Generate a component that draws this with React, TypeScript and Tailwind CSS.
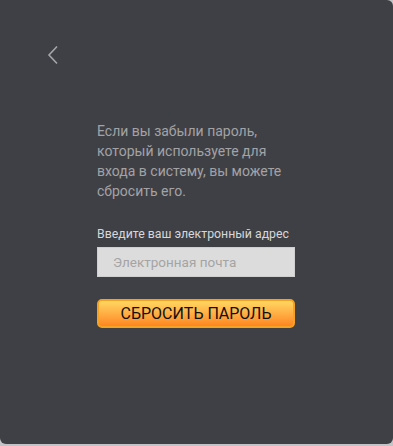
import React from 'react';

export default function App() {
  return (
    <div className="w-[393px] h-[446px] bg-[#c4c4c6]" style={{ fontFamily: 'Roboto, "Liberation Sans", sans-serif' }}>
      <div className="w-[393px] h-[444px] bg-[#3f4045] rounded-tr-[6px] rounded-b-[6px] relative">
        {/* back */}
        <button className="absolute left-[46px] top-[44px] w-[14px] h-[22px] flex items-center justify-center">
          <svg width="12" height="20" viewBox="0 0 12 20" fill="none">
            <path d="M10 1.5 L2 10 L10 18.5" stroke="#a6a6a8" strokeWidth="1.6" />
          </svg>
        </button>

        <div className="pt-[121px] pl-[97px] w-[296px]">
          <p className="text-[14px] leading-[20px] text-[#a3a3a5] pr-1">
            Если вы забыли пароль, который используете для входа в систему, вы можете сбросить его.
          </p>

          <label className="block mt-[25px] text-[12.3px] leading-[16px] text-[#d7d7d9]">
            Введите ваш электронный адрес
          </label>
          <input
            type="email"
            placeholder="Электронная почта"
            className="mt-[5px] block w-[198px] h-[30px] bg-[#dcdcdc] border border-[#cfcfcf] pl-[15px] text-[13.5px] text-[#333] placeholder:text-[#a4a4a4] outline-none"
          />

          <button className="mt-[22px] w-[198px] h-[29px] rounded-[5px] border-2 border-[#f5a223] bg-gradient-to-b from-[#ffd661] to-[#ff8520] text-[16px] leading-[18px] text-[#111] flex items-center justify-center">
            СБРОСИТЬ ПАРОЛЬ
          </button>
        </div>
      </div>
    </div>
  );
}
